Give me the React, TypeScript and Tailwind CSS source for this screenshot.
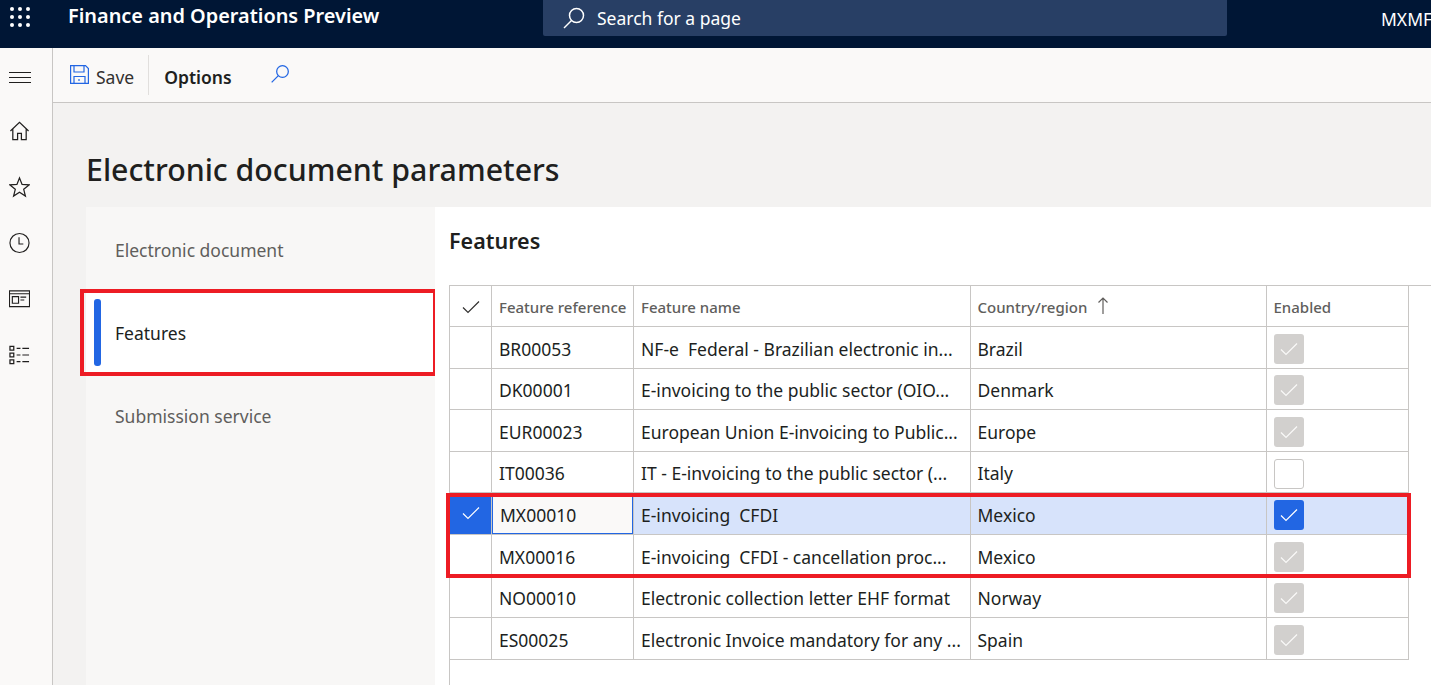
const rows = [
    { ref: "BR00053", name: "NF-e  Federal - Brazilian electronic in...", country: "Brazil", state: "locked" },
    { ref: "DK00001", name: "E-invoicing to the public sector (OIO...", country: "Denmark", state: "locked" },
    { ref: "EUR00023", name: "European Union E-invoicing to Public...", country: "Europe", state: "locked" },
    { ref: "IT00036", name: "IT - E-invoicing to the public sector (...", country: "Italy", state: "empty" },
    { ref: "MX00010", name: "E-invoicing  CFDI", country: "Mexico", state: "active" },
    { ref: "MX00016", name: "E-invoicing  CFDI - cancellation proc...", country: "Mexico", state: "locked" },
    { ref: "NO00010", name: "Electronic collection letter EHF format", country: "Norway", state: "locked" },
    { ref: "ES00025", name: "Electronic Invoice mandatory for any ...", country: "Spain", state: "locked" },
];

function Tick({ className }: { className: string }) {
    return <svg viewBox="0 0 18 14" className={className} fill="none" stroke="currentColor" strokeWidth="1.2">
        <path d="M1 7.5 L6 12.5 L17 1.5" />
    </svg>
}

function Box({ state }: { state: string }) {
    if (state === "empty") {
        return <div className="w-[30px] h-[30px] rounded-[3px] border border-[#c8c6c4] bg-white" />
    }
    return <div className={`w-[30px] h-[30px] rounded-[3px] flex items-center justify-center ${state === "active" ? "bg-[#2266e3] text-white" : "bg-[#d2d0ce] text-[#faf9f8]"}`}>
        <Tick className="w-[18px] h-[14px]" />
    </div>
}

function Row({ ref: code, name, country, state }: { ref: string; name: string; country: string; state: string }) {
    const active = state === "active";
    return <div className={`flex h-[41.6px] w-[960px] border-b-[1.5px] border-[#c8c6c4] text-[17.5px] text-[#201f1e] ${active ? "bg-[#d7e3fb]" : "bg-white"}`}>
        <div className={`w-[43px] shrink-0 border-l-[1.5px] border-r-[1.5px] border-[#c8c6c4] flex items-center justify-center ${active ? "bg-[#2266e3] text-white" : ""}`}>
            {active && <Tick className="w-[18px] h-[14px] -mt-[2px]" />}
        </div>
        {active ? (
            <div className="w-[142px] shrink-0 border-r-[1.5px] border-[#c8c6c4] flex items-center">
                <div className="w-full h-full bg-[#faf9f8] border border-[#2266e3] pl-[7px] pt-[2px] flex items-center">{code}</div>
            </div>
        ) : (
            <div className="w-[142px] shrink-0 border-r-[1.5px] border-[#c8c6c4] pl-[7px] pt-[3px] flex items-center">{code}</div>
        )}
        <div className="w-[336.5px] shrink-0 border-r-[1.5px] border-[#c8c6c4] pl-[7px] pt-[3px] flex items-center whitespace-pre">{name}</div>
        <div className="w-[296px] shrink-0 border-r-[1.5px] border-[#c8c6c4] pl-[7px] pt-[3px] flex items-center">{country}</div>
        <div className="w-[142.5px] shrink-0 border-r-[1.5px] border-[#c8c6c4] pl-[7px] pt-[3px] flex items-center"><Box state={state} /></div>
    </div>
}

export default function App() {
    return <div className="w-[1431px] h-[685px] overflow-hidden flex flex-col bg-[#f3f2f1] font-['Noto_Sans',sans-serif]">
        {/* top bar */}
        <div className="h-[48px] shrink-0 bg-[#001635] flex text-white">
            <div className="w-[68px] shrink-0 pl-[10px] pt-[7px]">
                <svg width="20" height="20" viewBox="0 0 20 20" fill="currentColor">
                    {[2, 10, 18].map((y) => [2, 10, 18].map((x) => <circle key={`${x}-${y}`} cx={x} cy={y} r="2" />))}
                </svg>
            </div>
            <p className="w-[475px] shrink-0 text-[19.9px] font-semibold leading-[32px]">Finance and Operations Preview</p>
            <div className="w-[684px] h-[36px] shrink-0 bg-[#283f65] rounded-b-[2px] flex items-center pl-[19px] gap-[11px]">
                <svg width="24" height="24" viewBox="0 0 24 24" fill="none" stroke="currentColor" strokeWidth="1.5">
                    <circle cx="14.5" cy="9.5" r="7" />
                    <path d="M9.5 14.5 L2 22" />
                </svg>
                <p className="text-[17.5px]">Search for a page</p>
            </div>
            <p className="ml-[154px] text-[17.5px] leading-[38px] whitespace-nowrap">MXMF</p>
        </div>

        <div className="flex-1 flex min-h-0">
            {/* left rail */}
            <div className="w-[53px] shrink-0 bg-[#faf9f8] border-r-[1.5px] border-[#c8c6c4] flex flex-col items-start pl-[9px] text-[#201f1e]">
                <svg width="22" height="24" viewBox="0 0 22 24" fill="none" stroke="currentColor" strokeWidth="1.1" className="mt-[17px]">
                    <path d="M0 7.5 H22 M0 12.500 H22 M0 17.500 H22" />
                </svg>
                <svg width="21" height="22" viewBox="0 0 22 22" fill="none" stroke="currentColor" strokeWidth="1.3" className="mt-[31px]">
                    <path d="M1.500 11 L11 2 L20.500 11 M4 9 V20 H9 V13.500 H13 V20 H18 V9" />
                </svg>
                <svg width="21" height="22" viewBox="0 0 22 22" fill="none" stroke="currentColor" strokeWidth="1.3" className="mt-[34px]">
                    <path d="M11 1.500 L13.700 8.300 L21 8.800 L15.400 13.400 L17.200 20.500 L11 16.600 L4.800 20.500 L6.600 13.400 L1 8.800 L8.300 8.300 Z" />
                </svg>
                <svg width="21" height="22" viewBox="0 0 22 22" fill="none" stroke="currentColor" strokeWidth="1.2" className="mt-[34px]">
                    <circle cx="11" cy="11" r="10" />
                    <path d="M10.500 5 V12 H15" />
                </svg>
                <svg width="21" height="18" viewBox="0 0 22 18" fill="none" stroke="currentColor" strokeWidth="1.2" className="mt-[36px]">
                    <path d="M.5 .5 H21.500 V17 H.5 Z M.5 3.500 H21.500 M3.500 6.500 H10 V13.500 H3.500 Z M12 7 H18 M12 10 H16" />
                </svg>
                <svg width="21" height="20" viewBox="0 0 22 20" fill="none" stroke="currentColor" strokeWidth="1.3" className="mt-[37px]">
                    <path d="M1 1 H5 V5 H1 Z M1 8 H5 V12 H1 Z M1 15 H5 V19 H1 Z M8 3 H12 M14 3 H21 M8 10 H12 M14 10 H21 M8 17 H12 M14 17 H21" />
                </svg>
            </div>

            <div className="flex-1 min-w-0 flex flex-col">
                {/* toolbar */}
                <div className="h-[55px] shrink-0 bg-[#faf9f8] border-b-[1.5px] border-[#c8c6c4] flex items-center pl-[17px]">
                    <svg width="19" height="19" viewBox="0 0 19 19" fill="none" stroke="#2266e3" strokeWidth="1.2" className="-mt-[2px]">
                        <path d="M.6 .6 H15.500 L18.400 3.500 V18.400 H.6 Z M4 .6 V7 H14 V.6 M4 18.400 V11.500 H15 V18.400 M9 14 V16" />
                    </svg>
                    <p className="ml-[7px] pt-[4px] text-[17.5px] text-[#323130]">Save</p>
                    <div className="ml-[14px] w-px h-[40px] bg-[#e1dfdd]" />
                    <p className="ml-[15px] pt-[4px] text-[17.5px] font-semibold text-[#201f1e]">Options</p>
                    <svg width="20" height="20" viewBox="0 0 24 24" fill="none" stroke="#2266e3" strokeWidth="1.5" className="ml-[38px] -mt-[3px]">
                        <circle cx="15" cy="9" r="7" />
                        <path d="M10 14 L2 22" />
                    </svg>
                </div>

                <div className="flex-1 min-h-0 pl-[33px] flex flex-col">
                    <h1 className="mt-[43px] h-[61px] shrink-0 text-[30.3px] font-medium leading-[48px] text-[#201f1e]">Electronic document parameters</h1>
                    <div className="flex-1 min-h-0 flex">
                        {/* nav */}
                        <div className="w-[349px] shrink-0 bg-[#f8f7f6] pt-[22px] text-[17.5px]">
                            <div className="h-[42px] pl-[29px] flex items-center text-[#605e5c]">Electronic document</div>
                            <div className="mt-[21px] h-[84px] bg-white flex items-center relative">
                                <div className="ml-[8px] -mt-[3px] w-[7px] h-[67px] rounded-[3px] bg-[#2266e3]" />
                                <p className="ml-[14px] -mt-[2px] text-[#201f1e]">Features</p>
                                <div className="absolute -left-[6px] -top-[3px] w-[357px] h-[87px] border-4 border-[#ed1c24]" />
                            </div>
                            <div className="mt-[19px] h-[42px] pl-[29px] flex items-center text-[#605e5c]">Submission service</div>
                        </div>
                        {/* features panel */}
                        <div className="flex-1 min-w-0 bg-white pl-[14px] relative">
                            <h2 className="mt-[17px] h-[61px] text-[21.5px] font-semibold leading-[34px] text-[#201f1e]">Features</h2>
                            <div className="border-t-[1.5px] border-[#c8c6c4]">
                                <div className="flex h-[41px] w-[960px] border-b-[1.5px] border-[#c8c6c4] text-[15px] font-medium text-[#605e5c]">
                                    <div className="w-[43px] shrink-0 border-l-[1.5px] border-r-[1.5px] border-[#c8c6c4] pt-[2px] flex items-center justify-center text-[#323130]">
                                        <Tick className="w-[18px] h-[14px]" />
                                    </div>
                                    <div className="w-[142px] shrink-0 border-r-[1.5px] border-[#c8c6c4] pl-[7px] pt-[2px] flex items-center whitespace-nowrap">Feature reference</div>
                                    <div className="w-[336.5px] shrink-0 border-r-[1.5px] border-[#c8c6c4] pl-[7px] pt-[2px] flex items-center">Feature name</div>
                                    <div className="w-[296px] shrink-0 border-r-[1.5px] border-[#c8c6c4] pl-[7px] pt-[2px] flex items-center">
                                        Country/region
                                        <svg width="12" height="18" viewBox="0 0 12 18" fill="none" stroke="currentColor" strokeWidth="1.2" className="ml-[10px] -mt-[2px]">
                                            <path d="M6 17 V1 M1.500 5.500 L6 1 L10.500 5.500" />
                                        </svg>
                                    </div>
                                    <div className="w-[142.5px] shrink-0 border-r-[1.5px] border-[#c8c6c4] pl-[7px] pt-[2px] flex items-center">Enabled</div>
                                </div>
                                {rows.map((r) => <Row key={r.ref} {...r} />)}
                                <div className="h-[30px] border-l-[1.5px] border-[#c8c6c4]" />
                            </div>
                            {/* red highlight over the two MX rows */}
                            <div className="absolute left-[11px] top-[286px] w-[965px] h-[85px] border-4 border-[#ed1c24]" />
                        </div>
                    </div>
                </div>
            </div>
        </div>
    </div>
}
